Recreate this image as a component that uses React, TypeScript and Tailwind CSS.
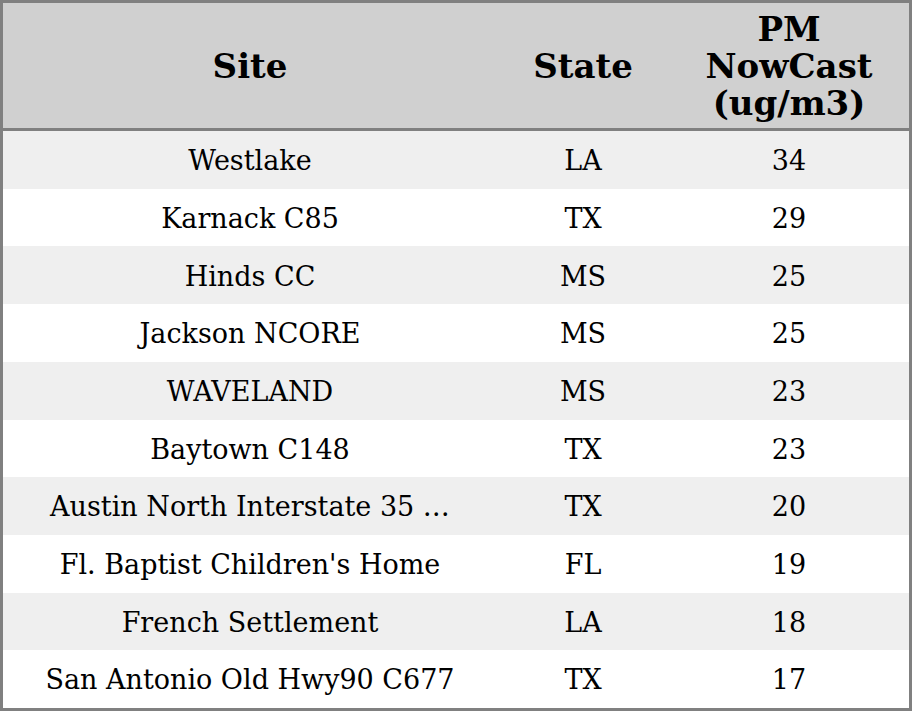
import React from "react";

const rows = [
  ["Westlake", "LA", "34"],
  ["Karnack C85", "TX", "29"],
  ["Hinds CC", "MS", "25"],
  ["Jackson NCORE", "MS", "25"],
  ["WAVELAND", "MS", "23"],
  ["Baytown C148", "TX", "23"],
  ["Austin North Interstate 35 …", "TX", "20"],
  ["Fl. Baptist Children's Home", "FL", "19"],
  ["French Settlement", "LA", "18"],
  ["San Antonio Old Hwy90 C677", "TX", "17"],
];

export default function App() {
  return (
    <div
      className="w-[912px] h-[711px] bg-white border-[3px] border-[#808080] flex flex-col text-black"
      style={{ fontFamily: '"DejaVu Serif", serif' }}
    >
      <div className="h-[128px] bg-[#d0d0d0] border-b-[3px] border-[#808080] grid grid-cols-[494px_172px_240px] items-center text-center font-bold text-[34px] leading-[37px] shrink-0">
        <div className="pt-[2px]">Site</div>
        <div className="pt-[2px]">State</div>
        <div className="pt-[1px]">
          PM
          <br />
          NowCast
          <br />
          (ug/m3)
        </div>
      </div>
      <div className="flex-1 flex flex-col">
        {rows.map((r, i) => (
          <div
            key={i}
            className={
              "flex-1 grid grid-cols-[494px_172px_240px] items-center text-center text-[27px] pt-[3px] " +
              (i % 2 === 0 ? "bg-[#efefef]" : "bg-white")
            }
          >
            <div>{r[0]}</div>
            <div>{r[1]}</div>
            <div>{r[2]}</div>
          </div>
        ))}
      </div>
    </div>
  );
}
